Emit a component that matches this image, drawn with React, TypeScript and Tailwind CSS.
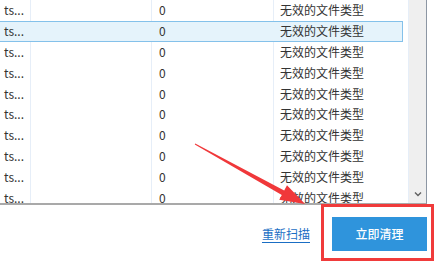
const rows = Array.from({ length: 10 }, (_, i) => i);

export default function App() {
  return (
    <div
      className="relative h-[263px] w-[446px] overflow-hidden bg-white text-[12px] text-[#333]"
      style={{ fontFamily: '"Noto Sans CJK SC", "Noto Sans", sans-serif' }}
    >
      {/* File list */}
      <div className="flex h-[205px] w-[427px] border-b-2 border-r border-b-[#a9a9a9] border-r-[#8c96a3]">
        <div className="w-[408px] overflow-hidden">
          {rows.map((i) => {
            const selected = i === 1;
            const line = selected ? "border-transparent" : "border-[#e6eef8]";
            return (
              <div
                key={i}
                className={`flex h-[20.8px] w-[403px] items-center leading-none ${
                  selected ? "border-y border-r border-[#84c1ea] bg-[#e5f3fb]" : ""
                }`}
              >
                <div className={`flex h-full w-[31px] shrink-0 items-center border-r pl-[4px] ${line}`}>
                  ts...
                </div>
                <div className={`h-full w-[121px] shrink-0 border-r ${line}`} />
                <div className={`flex h-full w-[122px] shrink-0 items-center border-r pl-[7px] ${line}`}>
                  0
                </div>
                <div className="flex h-full flex-1 items-center pl-[6px]">无效的文件类型</div>
              </div>
            );
          })}
        </div>
        {/* Scrollbar */}
        <div className="flex w-[18px] flex-col justify-end border-l border-[#e6eef8] bg-[#efefef] pb-[6px]">
          <svg viewBox="0 0 8 6" className="mx-auto h-[6px] w-[8px]">
            <path d="M1 1.5 L4 4.5 L7 1.5" fill="none" stroke="#606060" strokeWidth="1.4" />
          </svg>
        </div>
      </div>

      {/* Actions */}
      <div className="flex items-center justify-end gap-[22px] pr-[19px] pt-[12px]">
        <a className="text-[12px] text-[#1a6ec4] underline underline-offset-[3px]">重新扫描</a>
        <button className="h-[34px] w-[95px] bg-[#2f94dc] text-[12px] font-medium text-white">立即清理</button>
      </div>

      {/* Annotation: red box */}
      <div className="pointer-events-none absolute left-[321px] top-[204px] h-[57px] w-[113px] border-[3px] border-[#f03b3b]" />

      {/* Annotation: red arrow */}
      <svg className="pointer-events-none absolute left-0 top-0" width="446" height="263">
        <polygon
          points="195.2,143.6 284.2,190.6 287,185.2 305,204 279.2,199.8 281.8,194.9 194.8,144.4"
          fill="#f0383a"
        />
      </svg>
    </div>
  );
}
